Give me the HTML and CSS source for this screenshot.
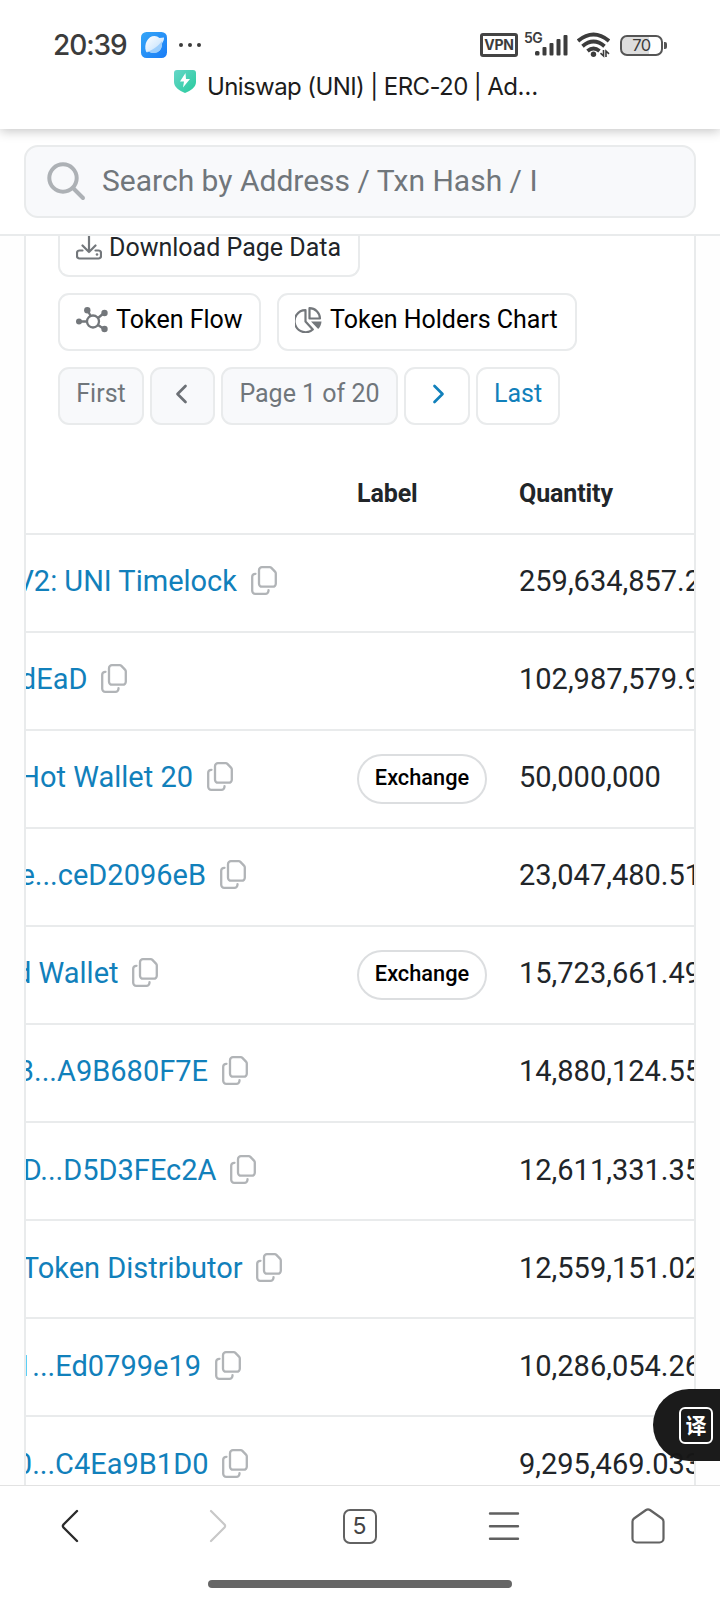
FILE: index.html
```html
<!DOCTYPE html>
<html lang="en">
<head>
<meta charset="utf-8">
<title>Uniswap (UNI) | ERC-20</title>
<link rel="stylesheet" href="styles.css">
</head>
<body>
<svg class="defs" width="0" height="0">
  <symbol id="copy" viewBox="0 0 26 29">
    <g fill="none" stroke="#b1b4b7" stroke-width="2.300" stroke-linejoin="round" stroke-linecap="round">
      <path d="M11 1.200h7.700q1 0 1.700.7l3.600 3.700q.8.800.8 1.800v10.300a3 3 0 0 1-3 3H11a3 3 0 0 1-3-3V4.200a3 3 0 0 1 3-3z"/>
      <path d="M4.500 7.800h-.3a3 3 0 0 0-3 3v14a3 3 0 0 0 3 3h10.300a3 3 0 0 0 3-3v-.6"/>
    </g>
  </symbol>
</svg>
<div class="phone">
  <header class="top">
    <div class="status">
      <span class="clock">20:39</span>
      <svg class="app" width="26" height="26" viewBox="0 0 26 26">
        <defs>
          <linearGradient id="sky" x1="0" y1="0" x2="1" y2="1"><stop offset="0" stop-color="#35a6f7"/><stop offset="1" stop-color="#1a7cf6"/></linearGradient>
          <linearGradient id="ball" x1="0" y1="0" x2="1" y2="1"><stop offset="0" stop-color="#fff"/><stop offset="1" stop-color="#b9dcfd"/></linearGradient>
        </defs>
        <rect width="26" height="26" rx="5.500" fill="url(#sky)"/>
        <path d="M5 19.500C2.500 12 7 4 13.500 4c2 0 3.500.7 5 2L23 5.500c.5 2-1.200 4.500-2 6 .5 5-3 9.500-8 9.500-2 0-3.500-.2-5-1.200-1.500.6-2.700.7-3-.3z" fill="url(#ball)"/>
        <path d="M5 20c6-1 13-6.500 16-11 1 6-2.500 12-8 12-2 0-3.500-.2-5-1.200-1 .5-2.500.7-3 .2z" fill="#8cc6fb" opacity=".75"/>
      </svg>
      <svg class="dots" width="24" height="6" viewBox="0 0 24 6" fill="#3c3c3c"><circle cx="3" cy="3" r="2"/><circle cx="12" cy="3" r="2"/><circle cx="21" cy="3" r="2"/></svg>
      <span class="vpn">VPN</span>
      <span class="net">5G</span>
      <svg class="bars" width="33" height="22" viewBox="0 0 33 22" fill="#3c3c3c"><rect y="17" width="4.500" height="4.500" rx="1.500"/><rect x="7.500" y="13" width="4" height="8.500" rx="1"/><rect x="14.500" y="9" width="4" height="12.500" rx="1"/><rect x="21.500" y="5" width="4" height="16.500" rx="1"/><rect x="28.500" y="1" width="4" height="20.500" rx="1"/></svg>
      <svg class="wifi" width="33" height="26" viewBox="0 0 33 26">
        <g fill="none" stroke="#3c3c3c" stroke-width="3.800"><path d="M1 9Q16.500-4 32 9"/><path d="M5.500 14.200Q16.500 4.700 27.500 14.200"/><path d="M10.500 19Q16.500 14 22.500 19"/></g>
        <circle cx="16.500" cy="22.300" r="2.700" fill="#3c3c3c"/>
        <path d="M26.500 18v6l-3-2.800M29 25v-6l3 2.800" fill="none" stroke="#3c3c3c" stroke-width="1.600"/>
      </svg>
      <span class="battery">70</span><i class="nub"></i>
    </div>
    <div class="title">
      <svg width="22" height="23" viewBox="0 0 22 23">
        <defs><linearGradient id="mint" x1="0" y1="0" x2="1" y2="1"><stop offset="0" stop-color="#66d6c8"/><stop offset="1" stop-color="#27cb9c"/></linearGradient></defs>
        <path d="M3 0h16q3 0 3 3v9c0 5-5 8.500-11 11C5 20.500 0 17 0 12V3q0-3 3-3z" fill="url(#mint)"/>
        <path d="M11.500 3L6 11.500h4l-1 6L16 9h-4z" fill="#fff"/>
      </svg>
      <span>Uniswap (UNI) | ERC-20 | Ad…</span>
    </div>
  </header>

  <div class="searchbar">
    <div class="search">
      <svg width="39" height="39" viewBox="0 0 39 39" fill="none" stroke="#adb1b5" stroke-width="4" stroke-linecap="round"><circle cx="16" cy="16" r="13.700"/><path d="M26 26l10 10"/></svg>
      <span class="placeholder">Search by Address / Txn Hash / I</span>
    </div>
  </div>

  <main class="page">
    <section class="card">
      <div class="tools">
        <div class="line">
          <span class="btn download">
            <svg width="26" height="25" viewBox="0 0 26 25"><g fill="none" stroke="#73777b" stroke-width="2.200" stroke-linecap="round" stroke-linejoin="round"><path d="M13 1v16M6.500 10.500L13 17l6.500-6.500"/><path d="M6.500 15.500H3.500a2.500 2.500 0 0 0-2.500 2.500v3a2.500 2.500 0 0 0 2.500 2.500h19A2.500 2.500 0 0 0 25 21v-3a2.500 2.500 0 0 0-2.500-2.500h-3"/></g><circle cx="21" cy="19.500" r="1.300" fill="#73777b"/></svg>
            Download Page Data</span>
        </div>
        <div class="line">
          <span class="btn black">
            <svg width="32" height="26" viewBox="0 0 32 26"><g fill="none" stroke="#73777b" stroke-width="2.300"><circle cx="17" cy="14.500" r="6"/><path d="M3 14.500h8M11.500 3l3 5.800M28 6l-6 5M28 22l-6-4"/></g><g fill="#73777b"><circle cx="3" cy="14.500" r="3"/><circle cx="11.300" cy="3.200" r="3.200"/><circle cx="28.500" cy="6" r="3.200"/><circle cx="28.500" cy="22" r="3.200"/></g></svg>
            Token Flow</span>
          <span class="btn black chart">
            <svg width="27" height="26" viewBox="0 0 27 26"><g fill="none" stroke="#73777b" stroke-width="2.200" stroke-linejoin="round"><path d="M10.500 3.200A11 11 0 1 0 17.800 22.500L10.500 14.500z"/><path d="M14.500 1.200v10.300H25A10.500 10.500 0 0 0 14.500 1.200z"/></g><path d="M16 14.500h10.500c-.3 3-1.400 5.500-3.300 7.500z" fill="#73777b"/></svg>
            Token Holders Chart</span>
        </div>
        <div class="pager">
          <span class="btn off first">First</span>
          <span class="btn off prev"><svg width="13" height="20" viewBox="0 0 13 20" fill="none" stroke="#6c7075" stroke-width="2.700" stroke-linecap="round" stroke-linejoin="round"><path d="M10.500 2L2.500 10l8 8"/></svg></span>
          <span class="btn off current">Page 1 of 20</span>
          <span class="btn link next"><svg width="13" height="20" viewBox="0 0 13 20" fill="none" stroke="#1180bb" stroke-width="2.700" stroke-linecap="round" stroke-linejoin="round"><path d="M2.500 2l8 8-8 8"/></svg></span>
          <span class="btn link last">Last</span>
        </div>
      </div>

      <div class="table">
        <div class="row head"><span></span><span>Label</span><span class="q">Quantity</span></div>
        <div class="row"><div class="addr" style="width:250.500px"><a>V2: UNI Timelock</a><svg><use href="#copy"/></svg></div><div></div><div class="qty">259,634,857.2</div></div>
        <div class="row"><div class="addr" style="width:101px"><a>dEaD</a><svg><use href="#copy"/></svg></div><div></div><div class="qty">102,987,579.9</div></div>
        <div class="row"><div class="addr" style="width:206.500px"><a>Hot Wallet 20</a><svg><use href="#copy"/></svg></div><div><span class="badge">Exchange</span></div><div class="qty">50,000,000</div></div>
        <div class="row"><div class="addr" style="width:219.500px"><a>e...ceD2096eB</a><svg><use href="#copy"/></svg></div><div></div><div class="qty">23,047,480.51</div></div>
        <div class="row"><div class="addr" style="width:132px"><a>d Wallet</a><svg><use href="#copy"/></svg></div><div><span class="badge">Exchange</span></div><div class="qty">15,723,661.49</div></div>
        <div class="row"><div class="addr" style="width:221.500px"><a>3...A9B680F7E</a><svg><use href="#copy"/></svg></div><div></div><div class="qty">14,880,124.55</div></div>
        <div class="row"><div class="addr low" style="width:230px"><a>D...D5D3FEc2A</a><svg><use href="#copy"/></svg></div><div></div><div class="qty low">12,611,331.35</div></div>
        <div class="row"><div class="addr low" style="width:256px"><a>Token Distributor</a><svg><use href="#copy"/></svg></div><div></div><div class="qty low">12,559,151.02</div></div>
        <div class="row"><div class="addr low" style="width:214.500px"><a>1...Ed0799e19</a><svg><use href="#copy"/></svg></div><div></div><div class="qty low">10,286,054.26</div></div>
        <div class="row"><div class="addr low" style="width:222px"><a>0...C4Ea9B1D0</a><svg><use href="#copy"/></svg></div><div></div><div class="qty low">9,295,469.033</div></div>
      </div>
    </section>
  </main>

  <div class="translate"><span>译</span></div>

  <nav class="bottom">
    <div class="keys">
      <span class="back"><svg width="18" height="34" viewBox="0 0 18 34" fill="none" stroke="#2b2b2b" stroke-width="2.400" stroke-linecap="round" stroke-linejoin="round"><path d="M16 2L2.500 15.500q-1.200 1.500 0 3L16 32"/></svg></span>
      <span class="forward"><svg width="18" height="34" viewBox="0 0 18 34" fill="none" stroke="#c8c8c8" stroke-width="2.200" stroke-linecap="round" stroke-linejoin="round"><path d="M2 2l13.500 13.500q1.200 1.500 0 3L2 32"/></svg></span>
      <span><b class="tabs">5</b></span>
      <span><svg width="32" height="32" viewBox="0 0 32 32" stroke="#606060" stroke-width="2.400" stroke-linecap="round"><path d="M2 3.500h28M2 16.200h28M2 28.800h28"/></svg></span>
      <span><svg width="34" height="36" viewBox="0 0 34 36" fill="none" stroke="#626262" stroke-width="2.200" stroke-linejoin="round"><path d="M15 2Q17 .6 19 2L31 10.500Q32.500 11.600 32.500 13.500V30.500a4 4 0 0 1-4 4h-23a4 4 0 0 1-4-4V13.500Q1.500 11.600 3 10.500z"/></svg></span>
    </div>
    <i class="handle"></i>
  </nav>
</div>
</body>
</html>
```

FILE: styles.css
```css
* { box-sizing: border-box; }
body { margin: 0; background: #fff; font-family: Roboto, "Noto Sans CJK SC", sans-serif; color: #212529; }
.defs { position: absolute; }
.phone { position: relative; width: 720px; height: 1600px; overflow: hidden; display: flex; flex-direction: column; background: #fefefe; }
svg { flex: none; display: block; }

.top { position: relative; z-index: 2; flex: none; height: 129px; background: #fff; box-shadow: 0 2px 11px rgba(0, 0, 0, .24); padding-top: 31px; font-family: Inter, Roboto, sans-serif; }
.status { display: flex; align-items: center; height: 28px; padding-left: 53px; color: #3c3c3c; }
.clock { width: 88px; font-size: 28px; font-weight: 500; letter-spacing: -1.1px; line-height: 28px; }
.dots { margin-left: 11px; }
.vpn { width: 38px; height: 24px; margin-left: 278px; border: 3px solid #444; border-radius: 3px; font-size: 14px; font-weight: 700; line-height: 18px; text-align: center; letter-spacing: -.3px; }
.net { width: 17px; margin-left: 6px; align-self: flex-start; font-size: 14px; font-weight: 600; line-height: 14px; letter-spacing: -.6px; }
.bars { margin-left: -6px; }
.wifi { margin-left: 9px; }
.battery { width: 43px; height: 21px; margin-left: 10px; border: 2px solid #555; border-radius: 7px; background: linear-gradient(90deg, #dedede 68%, #fff 68%); font-size: 16.500px; line-height: 17px; text-align: center; letter-spacing: -.5px; }
.nub { width: 3px; height: 7px; margin-left: 1px; border-radius: 0 2px 2px 0; background: #555; }
.title { display: flex; align-items: flex-start; gap: 11px; padding: 11px 0 0 174px; }
.title span { padding-top: 3px; font-size: 24px; line-height: 28px; letter-spacing: -.6px; color: #1c1c1c; white-space: nowrap; font-weight: 400; }

.searchbar { flex: none; height: 107px; padding: 16px 24px 0; border-bottom: 2px solid #e9ebec; background: #fff; }
.search { display: flex; align-items: center; height: 73px; padding-left: 21px; border: 2px solid #e9ebec; border-radius: 14px; background: #f8f9fb; }
.placeholder { margin-left: 16px; white-space: nowrap; font-size: 30px; line-height: 40px; padding-bottom: 2px; color: #70767b; }

.page { flex: 1; min-height: 0; overflow: hidden; padding: 0 24px; }
.card { width: 672px; height: 1300px; border: solid #e9ebec; border-width: 0 2px; background: #fff; overflow: hidden; }
.tools { padding: 0 32px; }
.line { display: flex; gap: 16px; margin-bottom: 16px; }
.btn { display: flex; align-items: center; justify-content: center; height: 58px; padding: 0 16px 4px; border: 2px solid #e9ebec; border-radius: 11px; font-size: 25px; line-height: 36px; white-space: nowrap; gap: 8px; background: #fff; }
.line .btn { justify-content: flex-start; }
.line .download { width: 302px; height: 41px; border-top: 0; border-radius: 0 0 11px 11px; padding: 0 0 16px 16px; line-height: 22px; gap: 7px; }
.black { width: 203px; color: #000; }
.chart { width: 300px; }
.pager { display: flex; gap: 6px; }
.off { background: #f8f9fb; color: #70767b; }
.link { color: #1180bb; }
.first { width: 86px; }
.prev { width: 65px; padding-right: 19px; }
.current { width: 177px; }
.next { width: 66px; padding-left: 18px; }
.last { width: 84px; }

.table { padding-top: 10px; }
.row { display: grid; grid-template-columns: 331px 162px 1fr; align-items: center; height: 98px; border-bottom: 2px solid #e9ebec; }
.head { height: 100px; padding-top: 19px; font-size: 25px; font-weight: 700; line-height: 36px; }
.head span { letter-spacing: -.1px; }
.addr { display: flex; align-items: center; justify-content: flex-end; gap: 13.500px; padding-bottom: 5px; overflow: hidden; white-space: nowrap; font-size: 29px; line-height: 44px; color: #1180bb; }
.addr svg { width: 26px; height: 29px; }
.qty { padding-bottom: 4px; font-size: 29px; line-height: 44px; white-space: nowrap; }
.low { position: relative; top: 1px; }
.badge { display: block; width: 130px; height: 50px; border: 2px solid #dcdee0; border-radius: 25px; color: #000; font-size: 21.750px; font-weight: 500; line-height: 43px; text-align: center; }

.translate { position: absolute; left: 653px; top: 1389px; width: 67px; height: 72px; padding: 18px 0 0 26px; border-radius: 36px 0 0 36px; background: rgba(22, 22, 22, .98); }
.translate span { display: block; width: 34px; height: 37px; border: 2.500px solid #fff; border-radius: 6px; color: #fff; font: 700 21px/31px "Noto Sans CJK SC", sans-serif; text-align: center; }

.bottom { flex: none; height: 115px; border-top: 1px solid #e2e2e2; background: #fff; }
.keys { display: grid; grid-template-columns: repeat(5, 1fr); height: 80px; align-items: center; }
.keys span { display: flex; justify-content: center; padding-right: 1px; }
.keys .back { padding-right: 4px; }
.keys .forward { padding-left: 4px; }
.tabs { width: 34px; height: 35px; border: 2px solid #626262; border-radius: 7px; font: 400 23px/31px Inter, sans-serif; text-align: center; color: #444; }
.handle { display: block; width: 304px; height: 8px; margin: 14px auto 0; border-radius: 4px; background: #666; }
```
